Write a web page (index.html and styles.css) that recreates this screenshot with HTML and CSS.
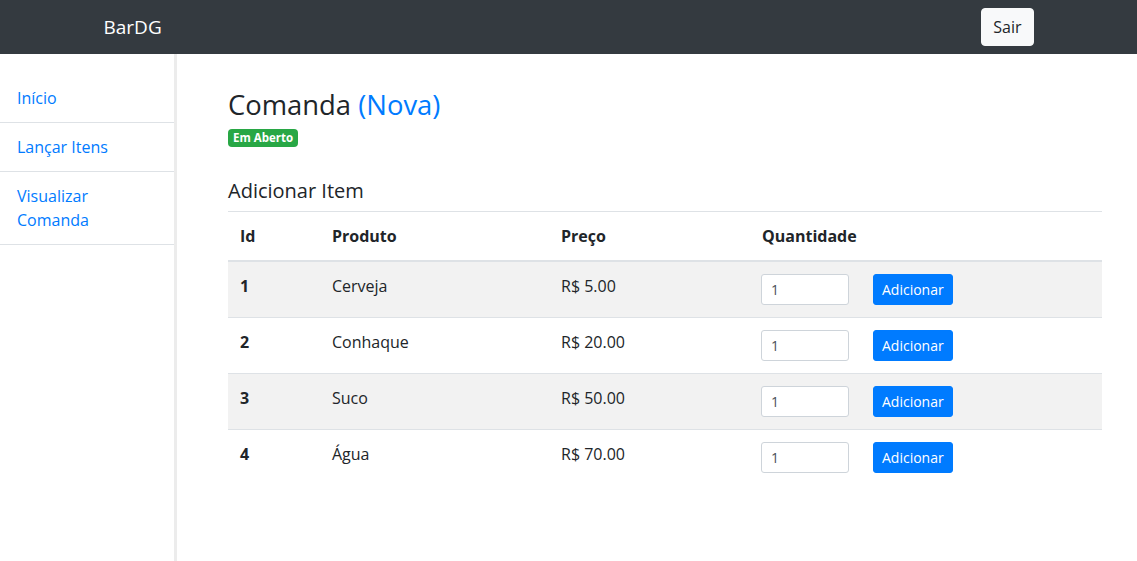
FILE: index.html
```html
<!DOCTYPE html>
<html lang="pt-BR">
<head>
<meta charset="utf-8">
<title>BarDG</title>
<link rel="stylesheet" href="styles.css">
</head>
<body>
<nav class="navbar">
  <div class="nav-inner">
    <span class="brand">BarDG</span>
    <button class="btn btn-light">Sair</button>
  </div>
</nav>
<div class="layout">
  <aside class="sidebar">
    <ul class="side-list">
      <li class="side-item"><a href="#">Início</a></li>
      <li class="side-item"><a href="#">Lançar Itens</a></li>
      <li class="side-item"><a href="#">Visualizar Comanda</a></li>
    </ul>
  </aside>
  <main class="main">
    <h3 class="title">Comanda <span class="title-accent">(Nova)</span></h3>
    <div class="badge-row"><span class="badge">Em Aberto</span></div>
    <h5 class="section-title">Adicionar Item</h5>
    <table class="table">
      <colgroup>
        <col class="c-id"><col class="c-prod"><col class="c-price"><col class="c-qty">
      </colgroup>
      <thead>
        <tr><th>Id</th><th>Produto</th><th>Preço</th><th>Quantidade</th></tr>
      </thead>
      <tbody>
        <tr class="striped"><th>1</th><td>Cerveja</td><td>R$ 5.00</td><td><div class="qty"><input class="input" type="text" value="1"><button class="btn btn-primary">Adicionar</button></div></td></tr>
        <tr><th>2</th><td>Conhaque</td><td>R$ 20.00</td><td><div class="qty"><input class="input" type="text" value="1"><button class="btn btn-primary">Adicionar</button></div></td></tr>
        <tr class="striped"><th>3</th><td>Suco</td><td>R$ 50.00</td><td><div class="qty"><input class="input" type="text" value="1"><button class="btn btn-primary">Adicionar</button></div></td></tr>
        <tr><th>4</th><td>Água</td><td>R$ 70.00</td><td><div class="qty"><input class="input" type="text" value="1"><button class="btn btn-primary">Adicionar</button></div></td></tr>
      </tbody>
    </table>
  </main>
</div>
</body>
</html>
```
FILE: styles.css
```css
* { box-sizing: border-box; }
html, body { margin: 0; height: 100%; }
body {
  font-family: "Segoe UI", "Open Sans", "Noto Sans", sans-serif;
  font-size: 16px;
  line-height: 1.5;
  color: #212529;
  background: #fff;
  display: flex;
  flex-direction: column;
}
a { color: #007bff; text-decoration: none; }

.navbar {
  background: #343a40;
  padding: 8px 0;
}
.nav-inner {
  max-width: 960px;
  margin: 0 auto;
  padding: 0 15px;
  display: flex;
  justify-content: space-between;
  align-items: center;
}
.brand {
  color: #fff;
  font-size: 19px;
  line-height: 30px;
  padding: 4px 0;
}
.btn {
  font-family: inherit;
  border: 1px solid transparent;
  border-radius: 4px;
  cursor: pointer;
}
.btn-light {
  background: #f8f9fa;
  border-color: #f8f9fa;
  color: #212529;
  font-size: 16px;
  line-height: 24px;
  padding: 6px 11px;
}
.btn-primary {
  background: #007bff;
  border-color: #007bff;
  color: #fff;
  font-size: 14px;
  line-height: 21px;
  padding: 4px 8px;
  border-radius: 3px;
}

.layout {
  flex: 1;
  display: flex;
}
.sidebar {
  width: 177px;
  flex: none;
  border-right: 3px solid #ececec;
  padding-top: 20px;
}
.side-list { list-style: none; margin: 0; padding: 0; }
.side-item {
  padding: 12px 30px 12px 17px;
  border-bottom: 1px solid #dee2e6;
}

.main {
  flex: 1;
  padding: 34px 35px 0 51px;
}
.title {
  margin: 0 0 8px;
  font-size: 27.4px;
  font-weight: 400;
  line-height: 33px;
}
.title-accent { color: #007bff; }
.badge-row { display: flex; margin-bottom: 32px; }
.badge {
  background: #28a745;
  color: #fff;
  font-size: 11.5px;
  font-weight: 700;
  line-height: 12px;
  height: 18px;
  padding: 3px 5px;
  border-radius: 4px;
}
.section-title {
  margin: 0 0 8px;
  font-size: 20px;
  font-weight: 400;
  line-height: 24px;
}

.table {
  width: 100%;
  border-collapse: collapse;
}
.c-id { width: 92px; }
.c-prod { width: 229px; }
.c-price { width: 201px; }
.table th, .table td {
  text-align: left;
  vertical-align: top;
  padding: 12px;
  border-top: 1px solid #dee2e6;
}
.table th { font-weight: 700; }
.table thead th { border-bottom: 2px solid #dee2e6; }
.table td { font-weight: 400; }
.striped { background: #f2f2f2; }
.qty { display: flex; align-items: center; gap: 24px; margin-left: -1px; }
.input {
  width: 88px;
  height: 31px;
  font-family: inherit;
  font-size: 14px;
  color: #495057;
  padding: 4px 9px;
  border: 1px solid #ced4da;
  border-radius: 3px;
  background: #fff;
}
```
